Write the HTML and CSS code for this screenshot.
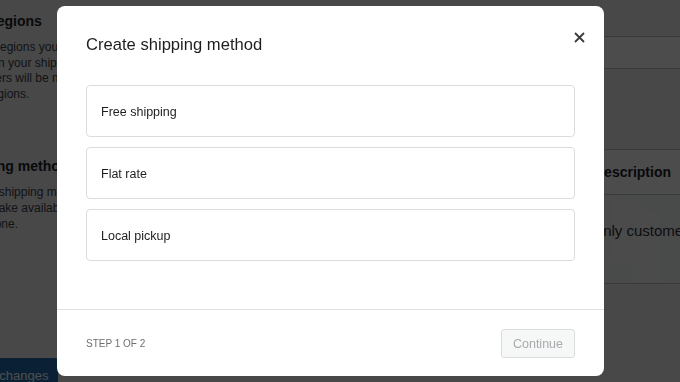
FILE: index.html
```html
<!DOCTYPE html>
<html lang="en">
<head>
  <meta charset="UTF-8" />
  <meta name="viewport" content="width=device-width, initial-scale=1.0" />
  <title>Shipping zone</title>
  <link rel="stylesheet" href="styles.css">
</head>
<body>
  <div class="page">
    <div class="sidebar">
      <h3>Zone regions</h3>
      <p class="desc">
        <span>List the regions you'd like to</span>
        <span>include in your shipping zone.</span>
        <span>Customers will be matched</span>
        <span>these regions.</span>
      </p>
      <h3 class="methods-title">Shipping methods</h3>
      <p class="desc">
        <span>Add the shipping methods you</span>
        <span>would make available to</span>
        <span>in this zone.</span>
      </p>
      <button class="save">Save changes</button>
    </div>

    <div class="main">
      <div class="zone-field"></div>
      <table class="methods">
        <colgroup>
          <col class="col-title">
          <col class="col-enabled">
          <col>
        </colgroup>
        <thead>
          <tr><th>Title</th><th>Enabled</th><th>Description</th></tr>
        </thead>
        <tbody>
          <tr>
            <td colspan="3" class="blank">
              <svg class="blank-art" width="120" height="90" viewBox="0 0 120 90">
                <path d="M30 0 L78 20 L78 90 L60 90 Q58 70 44 68 L30 66 Z" fill="#fff" opacity="0.5"/>
                <path d="M0 60 Q10 50 20 62 L22 90 L0 90 Z" fill="#fff" opacity="0.35"/>
              </svg>
              <span class="blank-text">You can add multiple shipping methods within this zone. Only customers within the zone will see them.</span>
            </td>
          </tr>
        </tbody>
      </table>
    </div>
  </div>

  <div class="overlay"></div>

  <div class="modal">
    <div class="modal-body">
      <h2>Create shipping method</h2>
      <button class="close" aria-label="Close">
        <svg width="11" height="11" viewBox="0 0 11 11">
          <path d="M1 1 L10 10 M10 1 L1 10" stroke="#3c3c3c" stroke-width="1.8" fill="none"/>
        </svg>
      </button>
      <div class="options">
        <div class="option">Free shipping</div>
        <div class="option">Flat rate</div>
        <div class="option">Local pickup</div>
      </div>
    </div>
    <div class="modal-footer">
      <span class="step">Step 1 of 2</span>
      <button class="continue" disabled>Continue</button>
    </div>
  </div>
</body>
</html>
```

FILE: styles.css
```css
body {
  margin: 0;
  width: 680px;
  height: 382px;
  overflow: hidden;
  position: relative;
  font-family: "Liberation Sans", Arial, sans-serif;
  background-color: #f0f0f1;
  color: #1d2327;
}
.page {
  display: flex;
  height: 382px;
}
.sidebar {
  width: 250px;
  flex-shrink: 0;
  margin-left: -46px;
  padding-top: 12px;
  display: flex;
  flex-direction: column;
}
.sidebar h3 {
  margin: 0 0 10px;
  font-size: 14px;
  line-height: 18px;
  font-weight: bold;
  white-space: nowrap;
}
.sidebar .methods-title {
  margin-top: 55px;
}
.desc {
  margin: 0;
  font-size: 12px;
  line-height: 15.6px;
  color: #3c434a;
}
.desc span {
  display: block;
  white-space: nowrap;
}
.save {
  margin-top: auto;
  margin-bottom: -10px;
  align-self: flex-start;
  height: 34px;
  padding: 0 10px 0 12px;
  border: none;
  border-radius: 3px;
  background-color: #2271b1;
  color: #fff;
  font-family: inherit;
  font-size: 13px;
}
.main {
  flex: 1;
}
.zone-field {
  margin-top: 36px;
  height: 31px;
  border-top: 1px solid #c3c4c7;
  border-bottom: 1px solid #c3c4c7;
  background-color: #fff;
}
.methods {
  margin-top: 80px;
  width: 100%;
  border-collapse: collapse;
  table-layout: fixed;
  background-color: #fff;
}
.col-title {
  width: 198px;
}
.col-enabled {
  width: 182px;
}
.methods th {
  height: 44px;
  padding: 0 10px;
  text-align: left;
  font-size: 14px;
  border-top: 1px solid #c3c4c7;
  border-bottom: 1px solid #c3c4c7;
  white-space: nowrap;
}
.methods td {
  border-bottom: 1px solid #c3c4c7;
}
.blank {
  height: 88px;
  position: relative;
  overflow: hidden;
  padding: 0 0 0 12px;
  background-color: #f6f7f7;
}
.blank-art {
  position: absolute;
  right: -20px;
  top: 0;
}
.blank-text {
  position: relative;
  display: block;
  margin-top: -17px;
  white-space: nowrap;
  font-size: 15px;
  color: #2c3338;
}
.overlay {
  position: fixed;
  inset: 0;
  background: rgba(0, 0, 0, 0.7);
}
.modal {
  position: absolute;
  top: 6px;
  left: 57px;
  width: 547px;
  height: 370px;
  background: #fff;
  border-radius: 8px;
  display: flex;
  flex-direction: column;
  overflow: hidden;
}
.modal-body {
  position: relative;
  padding: 27px 29px 48px;
  border-bottom: 1px solid #e0e0e0;
}
.modal-body h2 {
  margin: 0 0 28px;
  font-size: 16.6px;
  line-height: 24px;
  font-weight: normal;
  color: #1e1e1e;
}
.close {
  position: absolute;
  top: 21px;
  right: 15px;
  width: 20px;
  height: 20px;
  padding: 0;
  border: none;
  background: none;
  display: flex;
  align-items: center;
  justify-content: center;
}
.options {
  display: flex;
  flex-direction: column;
  gap: 10px;
}
.option {
  box-sizing: border-box;
  height: 52px;
  padding: 1px 14px 0;
  border: 1px solid #dcdcde;
  border-radius: 4px;
  display: flex;
  align-items: center;
  font-size: 12.5px;
  color: #1e1e1e;
}
.modal-footer {
  flex: 1;
  padding: 0 29px;
  display: flex;
  align-items: center;
  justify-content: space-between;
}
.step {
  padding-top: 1px;
  font-size: 10px;
  text-transform: uppercase;
  color: #6e6e6e;
}
.continue {
  height: 29px;
  padding: 1px 11px 0;
  border: 1px solid #dcdcde;
  border-radius: 3px;
  background-color: #f6f7f7;
  color: #a7aaad;
  font-family: inherit;
  font-size: 12.5px;
}
```
